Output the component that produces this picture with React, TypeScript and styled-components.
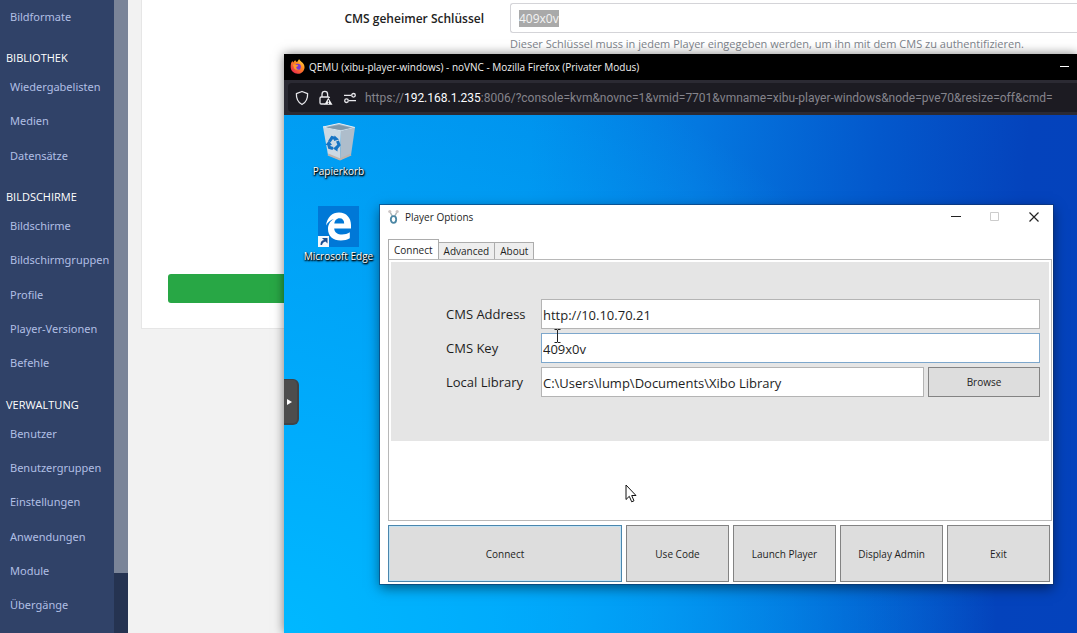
import React, { useEffect, useRef } from "react";
import styled, { createGlobalStyle } from "styled-components";

const ui = '"Open Sans", "Noto Sans", sans-serif';
const web = '"Noto Sans", "Open Sans", sans-serif';

const GlobalStyle = createGlobalStyle`
  *, *::before, *::after { box-sizing: border-box; }
  body { margin: 0; font-family: ${ui}; font-size: 12px; background: #f2f2f2; overflow: hidden; }
  button, input { font: inherit; color: inherit; margin: 0; border-radius: 0; }
  h2, p { margin: 0; }
`;

const Page = styled.div`
  display: flex;
  min-height: 100vh;
`;

/* ---------- CMS sidebar ---------- */

const Sidebar = styled.aside`
  display: flex;
  flex: none;
  width: 128px;
  background: #304268;
`;

const Nav = styled.nav`
  display: flex;
  flex-direction: column;
  flex: 1;
  min-width: 0;
  min-height: 100vh;
  padding-bottom: 10px;
  font-family: ${web};
  font-size: 11px;
`;

const NavHeading = styled.h2`
  flex: none;
  height: 36px;
  padding: 15px 0 0 6px;
  font-family: ${ui};
  font-size: 11px;
  line-height: 18px;
  font-weight: 400;
  color: #fff;
`;

const NavLink = styled.a`
  display: flex;
  align-items: center;
  flex: 1 0 34px;
  padding: 0 0 2px 10px;
  color: #b0bfe4;
  text-decoration: none;
  white-space: nowrap;
`;

const ScrollTrack = styled.div`
  width: 14px;
  background: #253351;
`;

const ScrollThumb = styled.div`
  height: 573px;
  background: #7a8498;
`;

/* ---------- CMS settings form ---------- */

const Main = styled.main`
  flex: 1;
  min-width: 0;
  padding-left: 13px;
`;

const Card = styled.section`
  display: flex;
  flex-direction: column;
  height: 329px;
  padding: 3px 0 25px 26px;
  background: #fff;
  border: 1px solid #e6e6e6;
  border-width: 0 0 1px 1px;
`;

const Field = styled.div`
  display: grid;
  grid-template-columns: 316px 1fr;
  column-gap: 26px;
  flex: 1;
  align-content: start;
`;

const FieldLabel = styled.label`
  text-align: right;
  font-weight: 600;
  line-height: 31px;
  color: #222;
`;

const KeyInput = styled.input`
  width: 100%;
  height: 30px;
  padding: 0 8px;
  border: 1px solid #d4d4d8;
  border-right: 0;
  border-radius: 3px 0 0 3px;
  color: #555;
  outline: none;
  &::selection { background: rgba(168, 168, 168, 0.99); color: #f4f4f4; }
`;

const Help = styled.p`
  grid-column: 2;
  font-size: 11px;
  line-height: 20px;
  color: #7d838b;
  white-space: nowrap;
`;

const SaveButton = styled.button`
  height: 29px;
  border: 0;
  border-radius: 3px 0 0 3px;
  background: #28a745;
`;

/* ---------- Firefox window ---------- */

const Browser = styled.section`
  position: absolute;
  top: 54px;
  left: 284px;
  right: 0;
  bottom: 0;
  display: flex;
  flex-direction: column;
  box-shadow: 0 0 10px rgba(0, 0, 0, 0.5);
`;

const TitleBar = styled.header`
  display: flex;
  align-items: center;
  gap: 4px;
  height: 26px;
  padding: 0 8px 1px 6px;
  background: #000;
  color: #f0f0f0;
  font-size: 10px;
`;

const TitleText = styled.span`
  flex: 1;
  white-space: nowrap;
`;

const WindowButton = styled.button`
  display: flex;
  padding: 0;
  border: 0;
  background: none;
`;

const ToolBar = styled.div`
  height: 35px;
  padding: 3px 0 3px 4px;
  background: #2b2a33;
`;

const UrlBar = styled.div`
  display: flex;
  align-items: center;
  height: 29px;
  padding-left: 6px;
  background: #1c1b22;
  border-radius: 4px 0 0 4px;
  color: #fbfbfe;
`;

const UrlIcons = styled.div`
  display: flex;
  align-items: center;
  gap: 8px;
  width: 71px;
`;

const Url = styled.span`
  flex: 1;
  overflow: hidden;
  font-family: Roboto, ${ui};
  white-space: nowrap;
  color: #85848c;
  b { font-weight: 400; color: #fbfbfe; }
`;

/* ---------- Remote Windows desktop ---------- */

const Desktop = styled.div`
  position: relative;
  flex: 1;
  overflow: hidden;
  background:
    radial-gradient(ellipse 90% 120% at 0% 100%, rgba(0, 184, 255, 1) 0%, rgba(0, 176, 255, 0.8) 35%, rgba(0, 150, 245, 0) 100%),
    linear-gradient(94deg, #0098f0 0%, #0090ec 30%, #0478e0 50%, #0358cc 72%, #0443bc 90%, #0442bc 100%);
`;

const Shortcut = styled.div<{ $top: number }>`
  position: absolute;
  left: 14px;
  top: ${(p) => p.$top}px;
  display: flex;
  flex-direction: column;
  align-items: center;
  gap: 1px;
  width: 81px;
  font-size: 10px;
  line-height: 16px;
  color: #fff;
  white-space: nowrap;
  text-shadow: 1px 1px 2px #000, 0 1px 2px #000, 1px 1px 1px rgba(0, 0, 0, 0.7);
`;

const VncHandle = styled.button`
  position: absolute;
  left: 0;
  top: 264px;
  display: flex;
  align-items: center;
  justify-content: center;
  width: 15px;
  height: 46px;
  padding: 0 2px 0 0;
  border: solid #3f4347;
  border-width: 1px 2px 2px 0;
  border-radius: 0 6px 6px 0;
  background: #4d4d4d;
`;

/* ---------- Player Options dialog ---------- */

const Dialog = styled.section`
  position: absolute;
  top: 90px;
  left: 96px;
  right: 24px;
  display: flex;
  flex-direction: column;
  padding: 0 1px 2px 8px;
  background: #fff;
  color: #1e1e1e;
  box-shadow: 0 0 0 1px rgba(16, 50, 100, 0.55), 0 4px 12px rgba(0, 0, 0, 0.5);
`;

const DialogTitle = styled.header`
  display: flex;
  align-items: center;
  gap: 6px;
  height: 25px;
  padding: 0 13px 1px 0;
  font-size: 10px;
`;

const Controls = styled.div`
  display: flex;
  gap: 29px;
`;

const Tabs = styled.div`
  display: flex;
  align-items: flex-end;
  height: 29px;
`;

const Tab = styled.button<{ $active?: boolean }>`
  height: ${(p) => (p.$active ? 20 : 17)}px;
  padding: 0 5px;
  border: 1px solid #acacac;
  border-bottom: 0;
  border-left-width: ${(p) => (p.$active ? 1 : 0)}px;
  background: ${(p) => (p.$active ? "#fff" : "#eee")};
  font-size: 10px;
  line-height: 16px;
`;

const Panel = styled.div`
  height: 262px;
  padding: 2px;
  border: 1px solid #b8b8b8;
`;

const Form = styled.form`
  display: grid;
  grid-template-columns: 95px 1fr 112px;
  row-gap: 4px;
  align-content: start;
  height: 179px;
  padding: 37px 9px 0 55px;
  background: #e5e5e5;
  font-size: 13px;
`;

const FormLabel = styled.label`
  line-height: 30px;
  white-space: nowrap;
`;

const TextBox = styled.input<{ $wide?: boolean; $focus?: boolean }>`
  grid-column: ${(p) => (p.$wide ? "2 / 4" : "2")};
  min-width: 0;
  height: 30px;
  margin-right: ${(p) => (p.$wide ? 0 : 4)}px;
  padding: 1px 1px 0;
  border: 1px solid ${(p) => (p.$focus ? "#7da7cc" : "#b4b4b4")};
  background: #fff;
  outline: none;
`;

const PushButton = styled.button<{ $primary?: boolean }>`
  border: 1px solid ${(p) => (p.$primary ? "#4a86ad" : "#838383")};
  box-shadow: ${(p) => (p.$primary ? "inset 0 0 0 1px #c4e2f2" : "none")};
  background: #ddd;
  font-size: 10px;
  color: #1e1e1e;
`;

const Actions = styled.div`
  display: grid;
  grid-template-columns: 1fr repeat(4, 103px);
  gap: 4px;
  height: 57px;
  margin-top: 4px;
  padding-right: 2px;
`;

const Pointer = styled.svg<{ $x: number; $y: number }>`
  position: absolute;
  left: ${(p) => p.$x}px;
  top: ${(p) => p.$y}px;
`;

/* ---------- Drawings ---------- */

const FirefoxLogo = () => (
  <svg width="15" height="15" viewBox="0 0 16 16" aria-hidden="true">
    <defs>
      <linearGradient id="fox" x1="1" y1="0" x2="0.2" y2="1">
        <stop offset="0" stopColor="#fff04a" />
        <stop offset="0.45" stopColor="#ff8a1f" />
        <stop offset="1" stopColor="#e8224f" />
      </linearGradient>
    </defs>
    <path d="M1 5.2C1.2 4 2 2.7 2.8 2.2c0 .8.3 1.3.6 1.6C4.200 2.600 5.200 1.500 5.600 1c.2 1 .9 1.900 2 2.200C8.300 2.200 9 1 9.800 0c.5 1.500 1.300 2 2.300 2.800C14 4.200 15.500 6 15.500 8.700 15.500 12.700 12.200 15.800 8.200 15.800S.7 12.600.7 8.600C.7 7.200.8 6 1 5.200z" fill="url(#fox)" />
    <circle cx="8.300" cy="8.300" r="3.300" fill="#7a3ad2" />
    <path d="M3 6.200c1.500-1 3-.8 4.300.2 1 .1 1.600.4 1.400.9-.3.700-1.700.8-2 1.500-.2 1.500 1.400 2.400 3 1.700-1.700 1.800-5.200 1-5.600-1.500C4 7.800 3.600 7 3 6.200z" fill="#ff9a2a" />
  </svg>
);

const ShieldIcon = () => (
  <svg width="16" height="16" viewBox="0 0 16 16" fill="none" stroke="#e8e8ec" strokeWidth="1.300" aria-hidden="true">
    <path d="M8 1.500 13.600 3.600C13.800 8.500 12.200 12.300 8 14.500 3.800 12.300 2.200 8.500 2.400 3.600z" strokeLinejoin="round" />
  </svg>
);

const LockIcon = () => (
  <svg width="16" height="16" viewBox="0 0 16 16" aria-hidden="true">
    <path d="M4 7V4.200a2.800 2.800 0 0 1 5.600 0V7M7 14H3.200A1.200 1.200 0 0 1 2 12.800V8.200A1.200 1.200 0 0 1 3.200 7h7.200a1.200 1.200 0 0 1 1.100 1" fill="none" stroke="#e8e8ec" strokeWidth="1.300" />
    <path d="M10.300 7.800 14.500 14.800H6.300z" fill="#f4f4f6" />
    <path d="M10.400 10.200v2.200M10.400 13v.9" stroke="#1c1b22" strokeWidth="1" />
  </svg>
);

const PermissionsIcon = () => (
  <svg width="16" height="16" viewBox="0 0 16 16" fill="none" stroke="#e8e8ec" strokeWidth="1.300" aria-hidden="true">
    <path d="M2 5.300h7M7 10.700h7" />
    <circle cx="11.500" cy="5.300" r="1.800" />
    <circle cx="4.500" cy="10.700" r="1.800" />
  </svg>
);

const RecycleBin = () => (
  <svg width="40" height="40" viewBox="0 0 40 40" aria-hidden="true">
    <path d="M4 5 20 1.500 36 5.500 22 9z" fill="#9fb4c4" stroke="#e6eef4" strokeWidth="1" />
    <path d="M7 5.500 20 3 32 5.800 22 8z" fill="#7f98aa" />
    <path d="M4 5 22 9 21 38 9 33z" fill="#ccd9e3" />
    <path d="M22 9 36 5.500 32 33 21 38z" fill="#aebdcb" />
    <path d="M9 32.500 21 37.500 32 32.500" fill="none" stroke="#bdb4ae" strokeWidth="2" />
    <g fill="none" stroke="#1674c4" strokeWidth="3">
      <path d="M10.500 19.500 13 15.500 16.500 16.500" />
      <path d="M18.500 19 20 23 17 26.500" />
      <path d="M14 26.500 10.500 25.500 9.500 22" />
    </g>
    <path d="M15.500 13.500 20 17.500 15 19zM18.500 23 14 26.500 18.500 29.500zM6.500 23 10 18.500 13 23z" fill="#1674c4" />
  </svg>
);

const EdgeTile = () => (
  <svg width="41" height="41" viewBox="0 0 41 41" aria-hidden="true">
    <rect width="41" height="41" fill="#0078d7" />
    <path d="M8 19.500C9 11 14.500 6.500 21 6.500c7.500 0 12 5.500 12 12.500v3.500H16.200c.3 4 3.500 6 7.800 6 3 0 5.500-.8 7.800-2.200v6C29.200 33.700 26.300 34.500 22.800 34.500 15 34.500 10 30 10 23c0-4.500 2.300-8 6-10C12.800 13.800 10 16 8 19.500zM16.300 17.500h9.900c0-3.300-1.700-5.300-4.700-5.300-2.900 0-4.800 2.300-5.200 5.300z" fill="#fff" />
    <rect x="0" y="30" width="11" height="11" fill="#f4f7fa" />
    <path d="M2.500 39c0-3 1-4.500 3.500-5L4 32h5.500v5.500L7.500 35.500C5.500 36 4.500 37 4 39z" fill="#1d4f91" />
  </svg>
);

const PlayerLogo = () => (
  <svg width="11" height="16" viewBox="0 0 11 16" aria-hidden="true">
    <path d="M2 3 4.500 7.500M9 3 6.500 7.500" stroke="#a9b4b8" strokeWidth="1.500" />
    <circle cx="1.800" cy="2.500" r="1.600" fill="#ccc6c6" />
    <circle cx="9.200" cy="2.500" r="1.600" fill="#ccc6c6" />
    <ellipse cx="5.500" cy="10.500" rx="2.700" ry="3.300" fill="#fff" stroke="#4c87a4" strokeWidth="1.800" />
  </svg>
);

type NavGroup = { title?: string; items: string[] };

const groups: NavGroup[] = [
  { items: ["Bildformate"] },
  { title: "BIBLIOTHEK", items: ["Wiedergabelisten", "Medien", "Datensätze"] },
  { title: "BILDSCHIRME", items: ["Bildschirme", "Bildschirmgruppen", "Profile", "Player-Versionen", "Befehle"] },
  {
    title: "VERWALTUNG",
    items: ["Benutzer", "Benutzergruppen", "Einstellungen", "Anwendungen", "Module", "Übergänge"],
  },
];

export default function App() {
  const keyRef = useRef<HTMLInputElement>(null);

  useEffect(() => {
    keyRef.current?.focus({ preventScroll: true });
    keyRef.current?.select();
  }, []);

  return (
    <>
      <GlobalStyle />
      <Page>
        <Sidebar>
          <Nav>
            {groups.map((g) => (
              <React.Fragment key={g.items[0]}>
                {g.title && <NavHeading>{g.title}</NavHeading>}
                {g.items.map((item) => (
                  <NavLink key={item} href="#">{item}</NavLink>
                ))}
              </React.Fragment>
            ))}
          </Nav>
          <ScrollTrack><ScrollThumb /></ScrollTrack>
        </Sidebar>
        <Main>
          <Card>
            <Field>
              <FieldLabel htmlFor="secret">CMS geheimer Schlüssel</FieldLabel>
              <KeyInput id="secret" ref={keyRef} defaultValue="409x0v" />
              <Help>Dieser Schlüssel muss in jedem Player eingegeben werden, um ihn mit dem CMS zu authentifizieren.</Help>
            </Field>
            <SaveButton type="button" aria-label="Speichern" />
          </Card>
        </Main>
      </Page>

      <Browser>
        <TitleBar>
          <FirefoxLogo />
          <TitleText>QEMU (xibu-player-windows) - noVNC - Mozilla Firefox (Privater Modus)</TitleText>
          <WindowButton aria-label="Minimieren">
            <svg width="9" height="10" viewBox="0 0 9 10"><path d="M0 4.500h9" stroke="#fff" strokeWidth="1" /></svg>
          </WindowButton>
        </TitleBar>
        <ToolBar>
          <UrlBar>
            <UrlIcons>
              <ShieldIcon />
              <LockIcon />
              <PermissionsIcon />
            </UrlIcons>
            <Url>
              https://<b>192.168.1.235</b>:8006/?console=kvm&amp;novnc=1&amp;vmid=7701&amp;vmname=xibu-player-windows&amp;node=pve70&amp;resize=off&amp;cmd=
            </Url>
          </UrlBar>
        </ToolBar>

        <Desktop>
          <Shortcut $top={7}>
            <RecycleBin />
            Papierkorb
          </Shortcut>
          <Shortcut $top={91}>
            <EdgeTile />
            Microsoft Edge
          </Shortcut>
          <VncHandle aria-label="noVNC">
            <svg width="5" height="6" viewBox="0 0 5 6"><path d="M0 0 5 3 0 6z" fill="#fff" /></svg>
          </VncHandle>

          <Dialog>
            <DialogTitle>
              <PlayerLogo />
              <TitleText>Player Options</TitleText>
              <Controls>
                <WindowButton aria-label="Minimize">
                  <svg width="10" height="10" viewBox="0 0 10 10"><path d="M0 4.500h10" stroke="#222" /></svg>
                </WindowButton>
                <WindowButton aria-label="Maximize" disabled>
                  <svg width="10" height="10" viewBox="0 0 10 10"><path d="M.5.500h8v8h-8z" fill="none" stroke="#ccc" /></svg>
                </WindowButton>
                <WindowButton aria-label="Close">
                  <svg width="10" height="10" viewBox="0 0 10 10"><path d="M.5.500 9.500 9.500M9.500.500.5 9.500" stroke="#222" strokeWidth="1.200" /></svg>
                </WindowButton>
              </Controls>
            </DialogTitle>
            <Tabs>
              <Tab $active>Connect</Tab>
              <Tab>Advanced</Tab>
              <Tab>About</Tab>
            </Tabs>
            <Panel>
              <Form>
                <FormLabel htmlFor="address">CMS Address</FormLabel>
                <TextBox id="address" $wide defaultValue="http://10.10.70.21" />
                <FormLabel htmlFor="key">CMS Key</FormLabel>
                <TextBox id="key" $wide $focus defaultValue="409x0v" />
                <FormLabel htmlFor="library">Local Library</FormLabel>
                <TextBox id="library" defaultValue={"C:\\Users\\lump\\Documents\\Xibo Library"} />
                <PushButton type="button">Browse</PushButton>
              </Form>
            </Panel>
            <Actions>
              <PushButton $primary>Connect</PushButton>
              <PushButton>Use Code</PushButton>
              <PushButton>Launch Player</PushButton>
              <PushButton>Display Admin</PushButton>
              <PushButton>Exit</PushButton>
            </Actions>
          </Dialog>

          <Pointer $x={269} $y={214} width="9" height="14" viewBox="0 0 9 14" aria-hidden="true">
            <path d="M1.500.500H4L4.500 1.500 5 .500H7.500M4.500 1v12M1.500 13.500H4L4.500 12.500 5 13.500H7.500" fill="none" stroke="#222" />
          </Pointer>
          <Pointer $x={341} $y={369} width="12" height="19" viewBox="0 0 12 19" aria-hidden="true">
            <path d="M1 1v14.500L4.300 12.300 6.700 17.800 9 16.800 6.700 11.500H11z" fill="#fff" stroke="#111" strokeWidth="1" />
          </Pointer>
        </Desktop>
      </Browser>
    </>
  );
}
